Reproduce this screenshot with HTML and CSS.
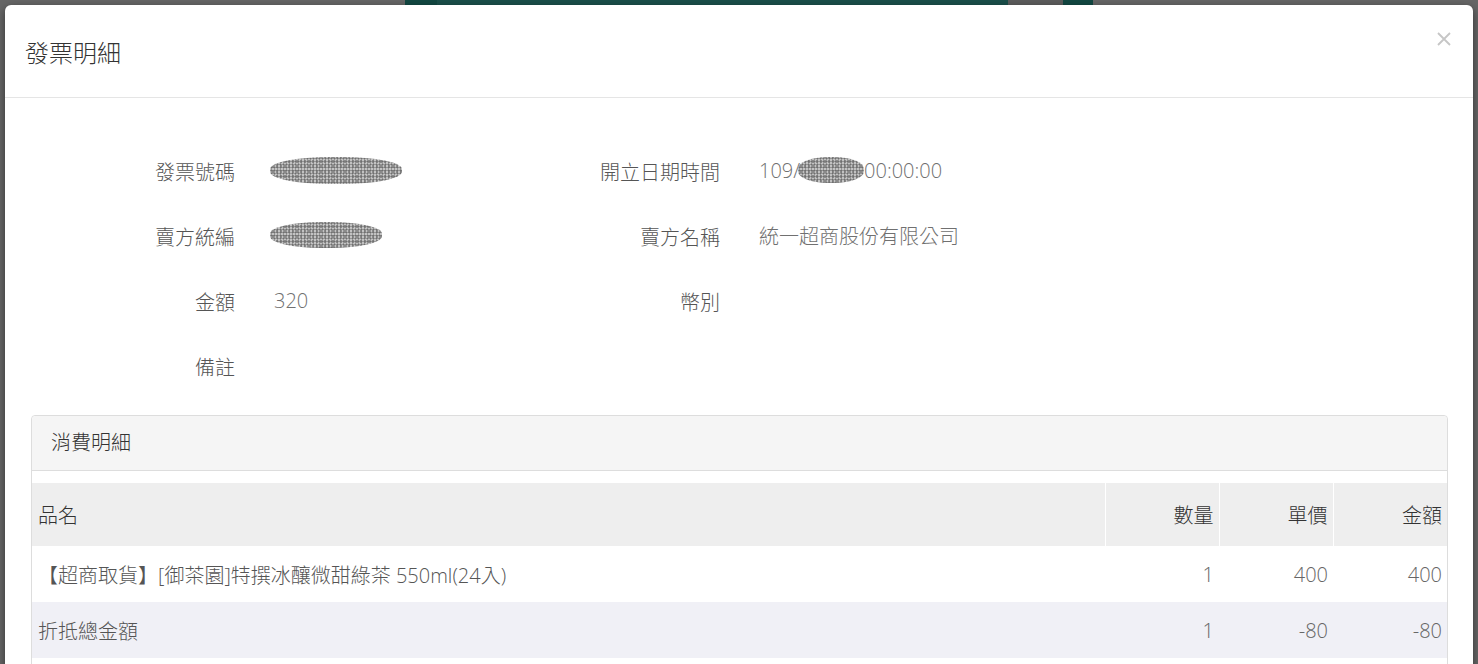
FILE: index.html
```html
<!DOCTYPE html>
<html lang="zh-Hant">
<head>
    <meta charset="UTF-8">
    <meta name="viewport" content="width=device-width, initial-scale=1.0">
    <title>發票明細</title>
    <link rel="stylesheet" href="styles.css">
</head>
<body>

    <div class="modal">
        <div class="modal-header">
            <h4 class="modal-title">發票明細</h4>
            <button class="close" type="button" aria-label="Close">
                <svg width="14" height="14" viewBox="0 0 14 14">
                    <path d="M1 1 L13 13 M13 1 L1 13" stroke="#c6c6c6" stroke-width="1.8" fill="none"/>
                </svg>
            </button>
        </div>

        <div class="modal-body">
            <div class="info-grid">
                <div class="info-label">發票號碼</div>
                <div class="info-value"><span class="masked masked-long"></span></div>
                <div class="info-label">開立日期時間</div>
                <div class="info-value">109/<span class="masked masked-date"></span>00:00:00</div>

                <div class="info-label">賣方統編</div>
                <div class="info-value"><span class="masked masked-short"></span></div>
                <div class="info-label">賣方名稱</div>
                <div class="info-value">統一超商股份有限公司</div>

                <div class="info-label">金額</div>
                <div class="info-value">320</div>
                <div class="info-label">幣別</div>
                <div class="info-value"></div>

                <div class="info-label">備註</div>
                <div class="info-value"></div>
                <div class="info-label"></div>
                <div class="info-value"></div>
            </div>

            <div class="panel">
                <div class="panel-heading">消費明細</div>
                <div class="panel-body">
                    <table class="detail-table">
                        <thead>
                            <tr>
                                <th class="col-name">品名</th>
                                <th class="col-num">數量</th>
                                <th class="col-num">單價</th>
                                <th class="col-num">金額</th>
                            </tr>
                        </thead>
                        <tbody>
                            <tr>
                                <td>【超商取貨】[御茶園]特撰冰釀微甜綠茶 550ml(24入)</td>
                                <td class="num">1</td>
                                <td class="num">400</td>
                                <td class="num">400</td>
                            </tr>
                            <tr class="stripe">
                                <td>折抵總金額</td>
                                <td class="num">1</td>
                                <td class="num">-80</td>
                                <td class="num">-80</td>
                            </tr>
                            <tr>
                                <td>&nbsp;</td>
                                <td class="num"></td>
                                <td class="num"></td>
                                <td class="num"></td>
                            </tr>
                        </tbody>
                    </table>
                </div>
            </div>
        </div>
    </div>

</body>
</html>
```

FILE: styles.css
```css
* {
    box-sizing: border-box;
}
html, body {
    height: 100%;
}
body {
    margin: 0;
    padding: 5px 5px 0 5px;
    overflow: hidden;
    font-family: "Open Sans", "Noto Sans CJK TC", sans-serif;
    font-weight: 300;
    color: #555;
    background-color: #666;
    background-image: linear-gradient(to right,
        transparent 405px, #124842 405px, #124842 437px, #1a4f4a 437px,
        #1a4f4a 1008px, #5c5c5c 1008px, #5c5c5c 1063px, #124842 1063px,
        #124842 1093px, transparent 1093px);
    background-size: 100% 5px;
    background-repeat: no-repeat;
}
.modal {
    background-color: white;
    border-radius: 6px 6px 0 0;
    box-shadow: 0 3px 9px rgba(0, 0, 0, 0.5);
    height: 700px;
}
.modal-header {
    display: flex;
    justify-content: space-between;
    height: 93px;
    padding: 0 22px 0 20px;
    border-bottom: 1px solid #e5e5e5;
}
.modal-title {
    margin: 0;
    align-self: center;
    font-size: 24px;
    font-weight: 300;
    color: #333;
}
.close {
    margin-top: 27px;
    align-self: flex-start;
    padding: 0;
    border: none;
    background: none;
    cursor: pointer;
    line-height: 0;
}
.modal-body {
    padding: 41px 25px 0 26px;
}
.info-grid {
    display: grid;
    grid-template-columns: 243px 242px 243px 1fr;
    grid-auto-rows: 65px;
    align-items: center;
    font-size: 20px;
}
.info-label {
    text-align: right;
    padding-right: 39px;
    color: #555;
}
.info-value {
    color: #707070;
    margin-top: -3px;
    display: flex;
    align-items: center;
}
.masked {
    display: inline-block;
    border-radius: 45%;
    background-color: rgba(120, 120, 120, 0.45);
    background-image:
        radial-gradient(circle, #6f6f6f 45%, transparent 50%),
        radial-gradient(circle, #8a8a8a 40%, transparent 45%);
    background-size: 3px 3px, 4px 5px;
    background-position: 0 0, 1px 2px;
}
.masked-long {
    width: 132px;
    height: 27px;
    margin-left: -4px;
}
.masked-short {
    width: 112px;
    height: 26px;
    margin-left: -4px;
}
.masked-date {
    width: 66px;
    height: 26px;
    margin-left: -2px;
}
.panel {
    margin-top: 16px;
    border: 1px solid #ddd;
    border-radius: 4px;
}
.panel-heading {
    height: 55px;
    line-height: 54px;
    padding: 0 19px;
    background-color: #f5f5f5;
    border-bottom: 1px solid #ddd;
    border-radius: 4px 4px 0 0;
    font-size: 20px;
    color: #333;
}
.panel-body {
    padding-top: 12px;
}
.detail-table {
    width: 100%;
    border-collapse: collapse;
    font-size: 20px;
}
.detail-table th {
    height: 63px;
    padding: 0 5px 0 6px;
    background-color: #eeeeee;
    color: #333;
    font-weight: 300;
}
.detail-table th.col-name {
    text-align: left;
}
.detail-table th.col-num {
    width: 114px;
    text-align: right;
    border-left: 1px solid white;
}
.detail-table td {
    height: 56px;
    padding: 0 5px 0 6px;
    color: #555;
}
.detail-table td.num {
    text-align: right;
    color: #666;
}
.detail-table tr.stripe td {
    background-color: #f0f0f6;
}
```
